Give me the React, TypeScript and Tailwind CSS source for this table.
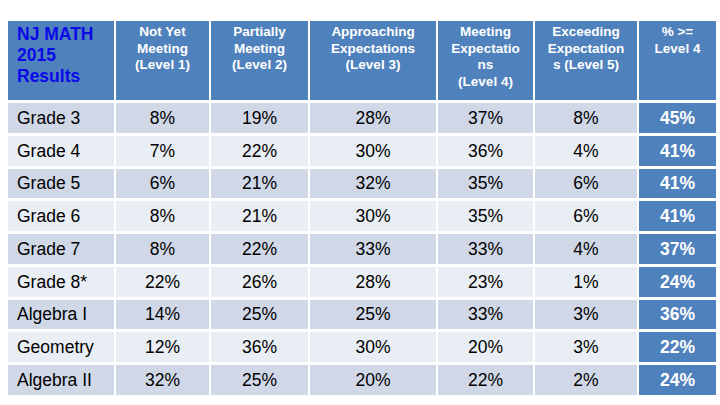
const header = [
  ["Not Yet", "Meeting", "(Level 1)"],
  ["Partially", "Meeting", "(Level 2)"],
  ["Approaching", "Expectations", "(Level 3)"],
  ["Meeting", "Expectatio", "ns", "(Level 4)"],
  ["Exceeding", "Expectation", "s (Level 5)"],
  ["% >=", "Level 4"],
];

const rows: [string, string, string, string, string, string, string][] = [
  ["Grade 3", "8%", "19%", "28%", "37%", "8%", "45%"],
  ["Grade 4", "7%", "22%", "30%", "36%", "4%", "41%"],
  ["Grade 5", "6%", "21%", "32%", "35%", "6%", "41%"],
  ["Grade 6", "8%", "21%", "30%", "35%", "6%", "41%"],
  ["Grade 7", "8%", "22%", "33%", "33%", "4%", "37%"],
  ["Grade 8*", "22%", "26%", "28%", "23%", "1%", "24%"],
  ["Algebra I", "14%", "25%", "25%", "33%", "3%", "36%"],
  ["Geometry", "12%", "36%", "30%", "20%", "3%", "22%"],
  ["Algebra II", "32%", "25%", "20%", "22%", "2%", "24%"],
];

export default function App() {
  return (
    <div className="h-[405px] w-[720px] bg-white pl-[8px] pt-[21px] font-['Liberation_Sans',Arial,sans-serif]">
      <div className="grid w-[708px] grid-cols-[106px_93px_97px_126px_95px_102px_77px] grid-rows-[79px_repeat(9,29.75px)] gap-x-[2px] gap-y-[3px]">
        <div className="bg-[#4f81bd] pl-[9px] pt-[3px] text-[17.5px] font-bold leading-[21px] text-[#0a0ae6]">
          NJ MATH
          <br />
          2015
          <br />
          Results
        </div>
        {header.map((lines, i) => (
          <div key={i} className="bg-[#4f81bd] pt-[3px] text-center text-[13.5px] font-bold leading-[16.5px] text-white">
            {lines.map((l, j) => (
              <div key={j} className="whitespace-pre">
                {l}
              </div>
            ))}
          </div>
        ))}
        {rows.map((r, i) => {
          const bg = i % 2 === 0 ? "bg-[#d0d8e8]" : "bg-[#e9edf4]";
          return [
            <div key={i + "-0"} className={`${bg} flex items-center pl-[9px] text-[17.5px] text-black`}>
              {r[0]}
            </div>,
            ...r.slice(1, 6).map((v, j) => (
              <div key={i + "-" + (j + 1)} className={`${bg} flex items-center justify-center text-[17.5px] text-black`}>
                {v}
              </div>
            )),
            <div key={i + "-6"} className="flex items-center justify-center bg-[#4f81bd] text-[17.5px] font-bold text-white">
              {r[6]}
            </div>,
          ];
        })}
      </div>
    </div>
  );
}
